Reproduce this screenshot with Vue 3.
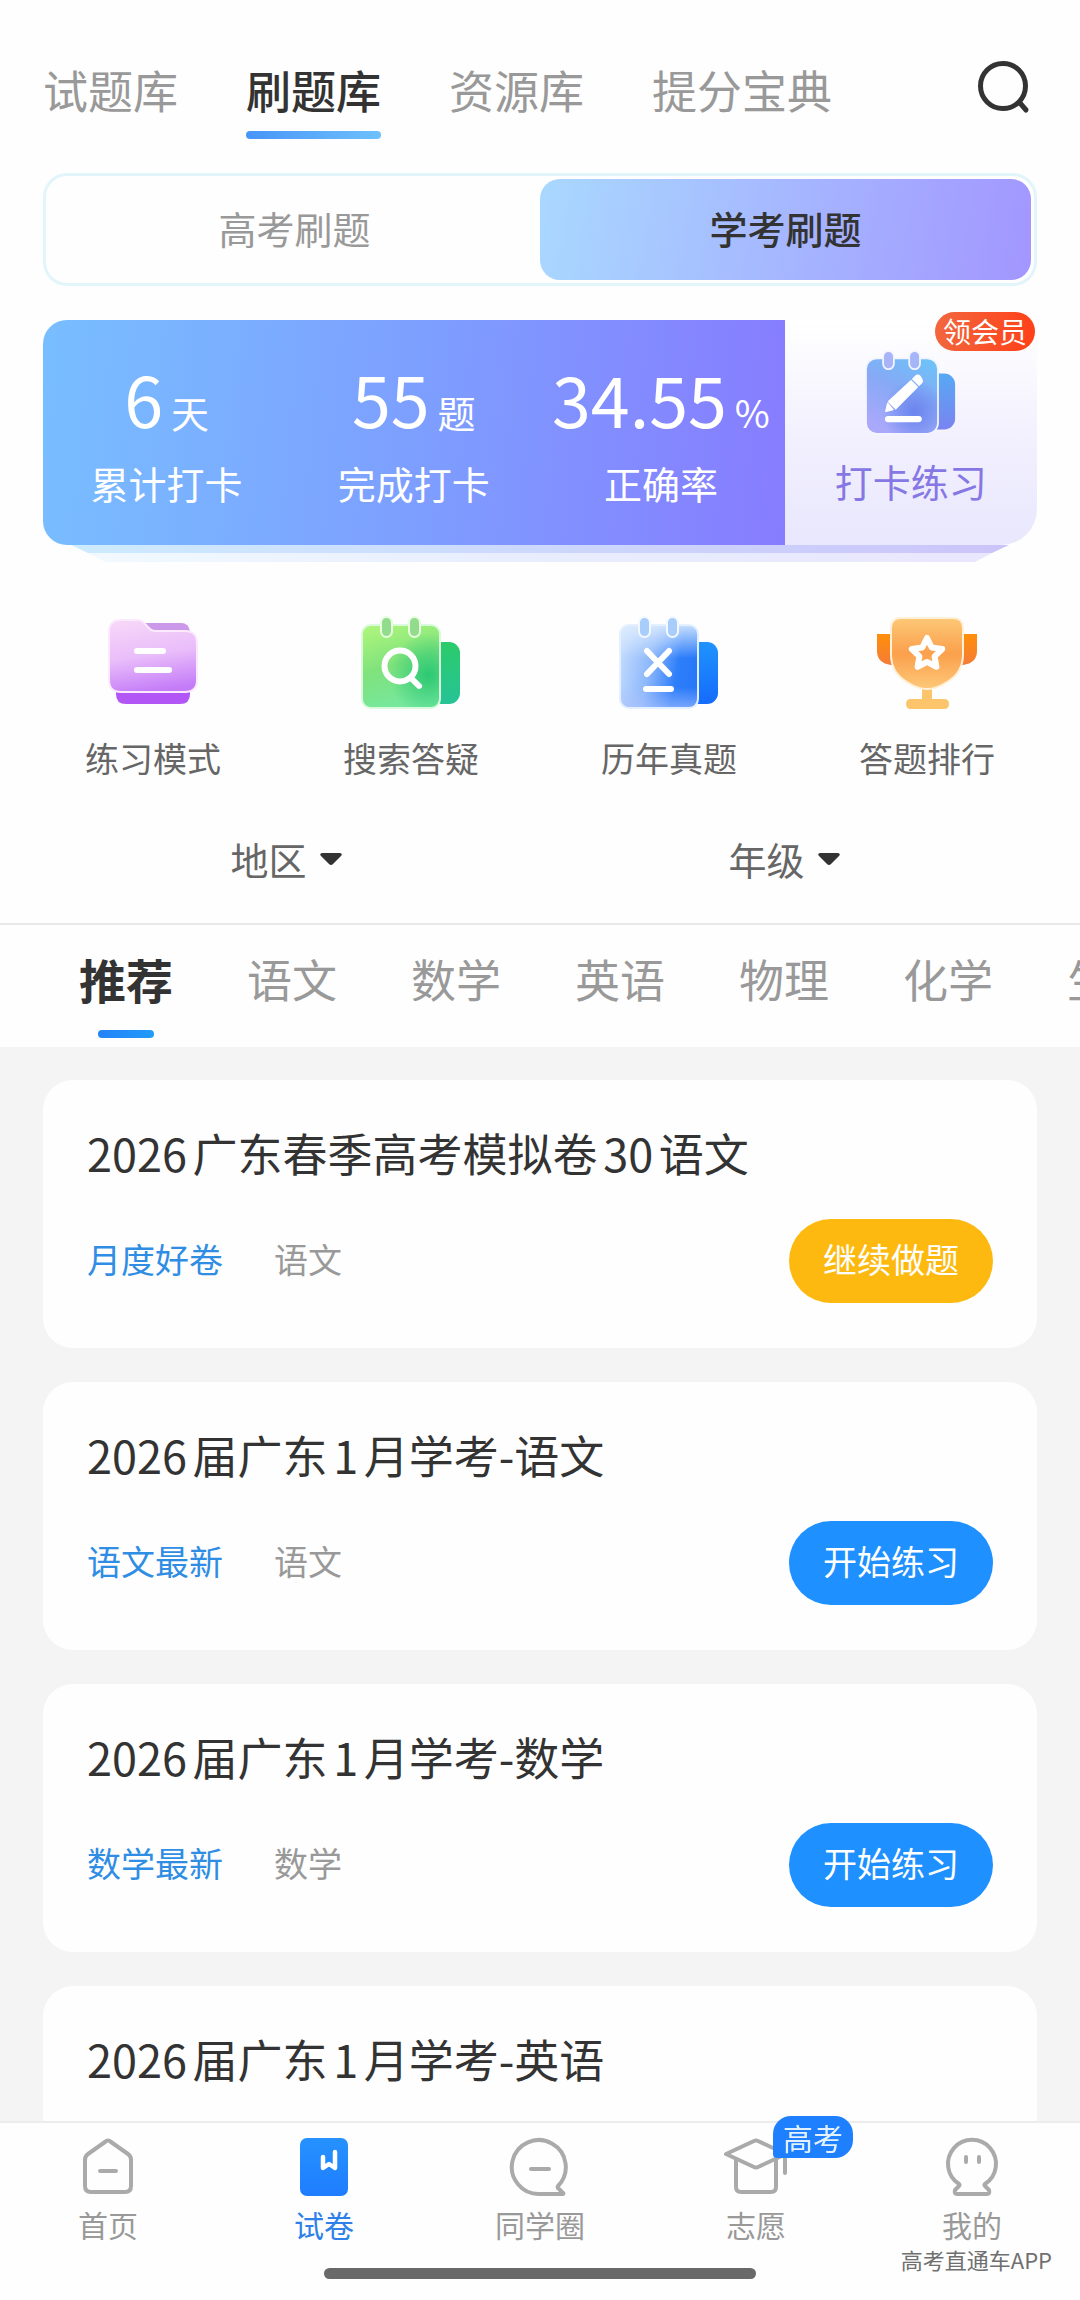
<template>
  <div class="page">
    <header class="header">
      <nav class="main-tabs">
        <button
          v-for="tab in mainTabs"
          :key="tab"
          class="main-tab"
          :class="{ active: tab === currentTab }"
          @click="currentTab = tab"
        >{{ tab }}</button>
      </nav>
      <button class="search-button" aria-label="搜索">
        <svg width="54" height="54" viewBox="0 0 54 54" fill="none" stroke="#333" stroke-width="5" stroke-linecap="round">
          <circle cx="26" cy="26" r="22.5" />
          <path d="M43 43l6 7" />
        </svg>
      </button>
    </header>

    <div class="segment">
      <button
        v-for="mode in modes"
        :key="mode"
        class="segment-item"
        :class="{ active: mode === currentMode }"
        @click="currentMode = mode"
      >{{ mode }}</button>
    </div>

    <section class="stats">
      <div class="stats-main">
        <div class="stats-data">
          <div v-for="item in stats" :key="item.label" class="stat">
            <div class="stat-value">{{ item.value }}<span class="stat-unit">{{ item.unit }}</span></div>
            <div class="stat-label">{{ item.label }}</div>
          </div>
        </div>
        <button class="practice">
          <svg class="practice-icon" width="90" height="83" viewBox="0 0 100 92">
            <defs>
              <linearGradient id="pBody" x1="0.9" y1="0" x2="0.4" y2="1">
                <stop offset="0" stop-color="#6cc4f8" />
                <stop offset="0.5" stop-color="#86a9f6" />
                <stop offset="1" stop-color="#a9a8fa" />
              </linearGradient>
              <radialGradient id="pGlow" cx="0.68" cy="0.72" r="0.45">
                <stop offset="0" stop-color="#6a83ee" />
                <stop offset="1" stop-color="#6a83ee" stop-opacity="0" />
              </radialGradient>
              <linearGradient id="pBack" x1="0" y1="0" x2="0" y2="1">
                <stop offset="0" stop-color="#57a9f4" />
                <stop offset="1" stop-color="#7a83f0" />
              </linearGradient>
            </defs>
            <rect x="60" y="25" width="39" height="62" rx="12" fill="url(#pBack)" />
            <rect x="0" y="8" width="80" height="84" rx="12" fill="url(#pBody)" stroke="#f4f4ff" stroke-width="2" />
            <rect x="1" y="9" width="78" height="82" rx="11" fill="url(#pGlow)" />
            <rect x="19" y="0" width="12" height="20" rx="6" fill="#a9b4f8" stroke="#f4f4ff" stroke-width="2" />
            <rect x="48" y="0" width="12" height="20" rx="6" fill="#a4b6f8" stroke="#f4f4ff" stroke-width="2" />
            <path d="M22 67l2-9 6 7z M25 56L50 33l7 7-24 24z M52 31l4-4q2-1 4 1l2 3q1 2 0 4l-3 3z" fill="#fff" stroke="#fff" stroke-width="1.5" stroke-linejoin="round" />
            <rect x="21" y="72" width="41" height="7" rx="3.5" fill="#fff" />
          </svg>
          <span class="practice-label">打卡练习</span>
          <span class="practice-badge">领会员</span>
        </button>
      </div>
      <div class="stats-layer first"></div>
      <div class="stats-layer second"></div>
    </section>

    <nav class="menu">
      <button class="menu-item">
        <svg width="100" height="92" viewBox="0 0 100 92">
          <defs>
            <linearGradient id="fBody" x1="0.3" y1="0" x2="0.5" y2="1">
              <stop offset="0" stop-color="#f6d6f8" />
              <stop offset="0.5" stop-color="#e9bdfa" />
              <stop offset="1" stop-color="#c47bf8" />
            </linearGradient>
          </defs>
          <path d="M40 6h38q8 0 9 9v10H44z" fill="#cb98ea" />
          <path d="M13 68h74v9q0 10-10 10H23q-10 0-10-10z" fill="#b257f6" />
          <path d="M18 3h17q4 0 7 4l5 5q2 2 5 2h30q12 0 12 12v37q0 12-12 12H18Q6 75 6 63V15Q6 3 18 3z" fill="url(#fBody)" stroke="#fbeafe" stroke-width="2" />
          <rect x="31" y="31" width="32" height="6" rx="3" fill="#fff" />
          <rect x="31" y="50" width="38" height="6" rx="3" fill="#fff" />
        </svg>
        <span>练习模式</span>
      </button>
      <button class="menu-item">
        <svg width="100" height="92" viewBox="0 0 100 92">
          <defs>
            <linearGradient id="sBody" x1="0.2" y1="0" x2="0.5" y2="1">
              <stop offset="0" stop-color="#adf57c" />
              <stop offset="0.5" stop-color="#7fe27c" />
              <stop offset="1" stop-color="#76e8a0" />
            </linearGradient>
            <radialGradient id="sGlow" cx="0.85" cy="0.6" r="0.5">
              <stop offset="0" stop-color="#2cc873" />
              <stop offset="1" stop-color="#2cc873" stop-opacity="0" />
            </radialGradient>
            <linearGradient id="sBack" x1="0" y1="0" x2="0" y2="1">
              <stop offset="0" stop-color="#2bcb6a" />
              <stop offset="1" stop-color="#26c397" />
            </linearGradient>
          </defs>
          <rect x="60" y="25" width="39" height="62" rx="11" fill="url(#sBack)" />
          <rect x="1" y="8" width="78" height="83" rx="9" fill="url(#sBody)" />
          <rect x="1" y="8" width="78" height="83" rx="9" fill="url(#sGlow)" stroke="#d9fbdc" stroke-width="2" />
          <rect x="20" y="0" width="11" height="20" rx="5.5" fill="#93dc8d" stroke="#e6fde0" stroke-width="2" />
          <rect x="48" y="0" width="11" height="20" rx="5.5" fill="#93dc8d" stroke="#e6fde0" stroke-width="2" />
          <g fill="none" stroke="#fff" stroke-width="6" stroke-linecap="round">
            <circle cx="39" cy="49" r="15.5" />
            <path d="M50 61l8 8" />
          </g>
        </svg>
        <span>搜索答疑</span>
      </button>
      <button class="menu-item">
        <svg width="100" height="92" viewBox="0 0 100 92">
          <defs>
            <linearGradient id="eBody" x1="0" y1="0.3" x2="1" y2="0.5">
              <stop offset="0" stop-color="#c4dcfd" />
              <stop offset="0.4" stop-color="#8db8fb" />
              <stop offset="0.75" stop-color="#2f7ffa" />
              <stop offset="1" stop-color="#2778fa" />
            </linearGradient>
            <linearGradient id="eShine" x1="0" y1="0" x2="0" y2="1">
              <stop offset="0" stop-color="#e2effe" stop-opacity="0.85" />
              <stop offset="0.4" stop-color="#e2effe" stop-opacity="0" />
              <stop offset="0.75" stop-color="#b0c4fc" stop-opacity="0" />
              <stop offset="1" stop-color="#b0c4fc" stop-opacity="0.6" />
            </linearGradient>
            <linearGradient id="eBack" x1="0" y1="0" x2="0" y2="1">
              <stop offset="0" stop-color="#1f93fd" />
              <stop offset="1" stop-color="#156bfb" />
            </linearGradient>
          </defs>
          <rect x="60" y="25" width="39" height="62" rx="11" fill="url(#eBack)" />
          <rect x="1" y="8" width="78" height="83" rx="9" fill="url(#eBody)" />
          <rect x="1" y="8" width="78" height="83" rx="9" fill="url(#eShine)" stroke="#e4f0ff" stroke-width="2" />
          <rect x="20" y="0" width="11" height="20" rx="5.5" fill="#a9cdfb" stroke="#f2f8ff" stroke-width="2" />
          <rect x="48" y="0" width="11" height="20" rx="5.5" fill="#a9cdfb" stroke="#f2f8ff" stroke-width="2" />
          <path d="M28 34l22 23M50 34L28 57M27 72h25" fill="none" stroke="#fff" stroke-width="6" stroke-linecap="round" />
        </svg>
        <span>历年真题</span>
      </button>
      <button class="menu-item">
        <svg width="100" height="92" viewBox="0 0 100 92">
          <defs>
            <linearGradient id="tCup" x1="0" y1="0" x2="0" y2="1">
              <stop offset="0" stop-color="#fdc877" />
              <stop offset="0.5" stop-color="#fba04c" />
              <stop offset="1" stop-color="#fdc878" />
            </linearGradient>
            <linearGradient id="tEar" x1="0" y1="0" x2="0" y2="1">
              <stop offset="0" stop-color="#ff8f09" />
              <stop offset="1" stop-color="#f47c38" />
            </linearGradient>
          </defs>
          <path d="M0 17h20v31h-6Q0 46 0 34zM100 17H80v31h6q14-2 14-14z" fill="url(#tEar)" />
          <path d="M45 66h10v16h12q5 0 5 5t-5 5H34q-5 0-5-5t5-5h11z" fill="#fcc56b" />
          <path d="M24 1h52q10 0 10 10v26q0 19-16 28-10 7-20 7t-20-7Q14 56 14 37V11Q14 1 24 1z" fill="url(#tCup)" stroke="#fff0d8" stroke-width="2" />
          <path d="M50 21l4.700 9.500 10.500 1.500-7.600 7.400 1.800 10.400-9.400-4.900-9.400 4.900 1.800-10.400-7.600-7.400 10.500-1.500z" fill="none" stroke="#fff" stroke-width="6" stroke-linejoin="round" />
        </svg>
        <span>答题排行</span>
      </button>
    </nav>

    <div class="filters">
      <label v-for="item in filters" :key="item.name" class="filter">
        <select class="filter-select" :aria-label="item.name">
          <option>{{ item.name }}</option>
        </select>
        <svg width="22" height="12" viewBox="0 0 22 12"><path d="M2 0h18q3 1 1 3l-8 8q-2 2-4 0L1 3q-2-2 1-3z" fill="#333" /></svg>
      </label>
    </div>

    <nav class="subjects">
      <button
        v-for="subject in subjects"
        :key="subject"
        class="subject"
        :class="{ active: subject === currentSubject }"
        @click="currentSubject = subject"
      >{{ subject }}</button>
    </nav>

    <main class="paper-list">
      <article v-for="paper in papers" :key="paper.title" class="paper">
        <h2 class="paper-title">{{ paper.title }}</h2>
        <div class="paper-row">
          <span class="paper-tag">{{ paper.tag }}</span>
          <span class="paper-subject">{{ paper.subject }}</span>
          <button class="paper-button" :class="{ resume: paper.started }">
            {{ paper.started ? '继续做题' : '开始练习' }}
          </button>
        </div>
      </article>
    </main>

    <footer class="tabbar">
      <nav class="tabbar-items">
        <a href="#home" class="tabbar-item">
          <svg width="60" height="60" viewBox="0 0 60 60" class="line-icon">
            <path d="M33 5l17 12q3 2 3 6v26q0 6-6 6H13q-6 0-6-6V23q0-4 3-6L27 5q3-3 6 0zM22 34h16" />
          </svg>
          <span>首页</span>
        </a>
        <a href="#paper" class="tabbar-item current">
          <svg width="60" height="60" viewBox="0 0 60 60">
            <defs>
              <linearGradient id="nDoc" x1="0" y1="0" x2="0" y2="1">
                <stop offset="0" stop-color="#2592ff" />
                <stop offset="1" stop-color="#1f7dff" />
              </linearGradient>
            </defs>
            <rect x="6" y="1" width="48" height="58" rx="7" fill="url(#nDoc)" />
            <path d="M29 20v11l6-4 6 4V15" fill="none" stroke="#fff" stroke-width="4.500" stroke-linecap="round" stroke-linejoin="round" />
          </svg>
          <span>试卷</span>
        </a>
        <a href="#circle" class="tabbar-item">
          <svg width="60" height="60" viewBox="0 0 60 60" class="line-icon">
            <path d="M30 57a27 27 0 1 1 18-8q-1 2 1 3l4 4q1 1-1 1zM21 32h18" />
          </svg>
          <span>同学圈</span>
        </a>
        <a href="#wish" class="tabbar-item">
          <span class="icon-wrap">
            <svg width="64" height="60" viewBox="-2 0 64 60" class="line-icon">
              <path d="M0 17L28 4q2-1 4 0l28 13-28 13q-2 1-4 0zM10 22v28q0 5 5 5h30q5 0 5-5V22M59 18v18" />
            </svg>
            <span class="tabbar-badge">高考</span>
          </span>
          <span>志愿</span>
        </a>
        <a href="#mine" class="tabbar-item">
          <svg width="60" height="60" viewBox="0 0 60 60" class="line-icon">
            <path d="M17 47A24 24 0 1 1 43 47q-1 1 0 2l4 4q1 4-2 4H15q-3 0-2-4l4-4q1-1 0-2zM24 20v5M37 20v5" />
          </svg>
          <span>我的</span>
        </a>
      </nav>
      <div class="home-bar"></div>
      <span class="watermark">高考直通车APP</span>
    </footer>
  </div>
</template>

<script setup>
import { ref } from 'vue';

const mainTabs = ['试题库', '刷题库', '资源库', '提分宝典'];
const currentTab = ref('刷题库');

const modes = ['高考刷题', '学考刷题'];
const currentMode = ref('学考刷题');

const stats = [
  { value: '6', unit: '天', label: '累计打卡' },
  { value: '55', unit: '题', label: '完成打卡' },
  { value: '34.55', unit: '%', label: '正确率' }
];

const filters = [{ name: '地区' }, { name: '年级' }];

const subjects = ['推荐', '语文', '数学', '英语', '物理', '化学', '生物'];
const currentSubject = ref('推荐');

const papers = ref([
  { title: '2026广东春季高考模拟卷30语文', tag: '月度好卷', subject: '语文', started: true },
  { title: '2026届广东1月学考-语文', tag: '语文最新', subject: '语文', started: false },
  { title: '2026届广东1月学考-数学', tag: '数学最新', subject: '数学', started: false },
  { title: '2026届广东1月学考-英语', tag: '英语最新', subject: '英语', started: false }
]);
</script>

<style>
body {
  margin: 0;
  background: #fefefe;
}
</style>

<style scoped>
.page {
  display: flex;
  flex-direction: column;
  height: 100vh;
  background: #fefefe;
  color: #333;
  font-family: "Noto Sans CJK SC", sans-serif;
}

button,
select {
  margin: 0;
  padding: 0;
  border: none;
  background: none;
  color: inherit;
  font-family: inherit;
  cursor: pointer;
}

svg {
  display: block;
  flex: none;
  overflow: visible;
}

.header {
  display: flex;
  justify-content: space-between;
  align-items: flex-start;
  padding: 58px 49px 0 43px;
}

.main-tabs {
  display: flex;
  gap: 68px;
}

.main-tab {
  font-size: 45px;
  line-height: 64px;
  color: #999;
  white-space: nowrap;
}

.main-tab::after {
  content: '';
  display: block;
  height: 8px;
  margin-top: 9px;
  border-radius: 4px;
}

.main-tab.active {
  color: #333;
  font-weight: 500;
}

.main-tab.active::after {
  background: linear-gradient(90deg, #4795f7, #6fc0fd);
}

.search-button {
  padding-top: 2px;
}

.segment {
  display: flex;
  margin: 34px 43px 0;
  padding: 3px;
  border: 3px solid #e2f5fb;
  border-radius: 24px;
}

.segment-item {
  flex: 1;
  height: 101px;
  padding-bottom: 5px;
  border-radius: 20px;
  font-size: 38px;
  color: #999;
}

.segment-item.active {
  background: linear-gradient(100deg, #a9d8ff, #a296ff);
  color: #333;
  font-weight: 500;
}

.stats {
  margin: 34px 43px 0;
}

.stats-main {
  display: flex;
}

.stats-data {
  flex: 1;
  display: flex;
  border-radius: 24px 0 0 24px;
  background: linear-gradient(95deg, #78beff, #7d9fff 50%, #877cff);
  color: #fff;
}

.stat {
  flex: 1 1 0;
  min-width: 0;
  padding: 38px 0 37px;
  text-align: center;
  white-space: nowrap;
}

.stat-value {
  font-size: 70px;
  line-height: 80px;
}

.stat-unit {
  margin-left: 8px;
  font-size: 38px;
  line-height: 38px;
}

.stat-label {
  margin-top: 20px;
  font-size: 38px;
  line-height: 50px;
}

.practice {
  flex: none;
  width: 25.4%;
  position: relative;
  display: flex;
  flex-direction: column;
  align-items: center;
  padding: 31px 0 0;
  border-radius: 0 0 36px 0;
  background: linear-gradient(180deg, #fff, #f3f1fe 50%, #e8e7fd);
}

.practice-label {
  margin-top: 22px;
  font-size: 38px;
  line-height: 50px;
  color: #8678e4;
}

.practice-badge {
  position: absolute;
  top: -8px;
  right: 2px;
  padding: 0 8px;
  border-radius: 20px;
  background: linear-gradient(100deg, #f2683f, #ff3f17);
  color: #fff;
  font-size: 28px;
  line-height: 39px;
}

.stats-layer {
  margin: 0 28px;
}

.stats-layer.first {
  height: 8px;
  background: linear-gradient(90deg, #cdebff, #ccdafd 45%, #cbc4fa);
  clip-path: polygon(0 0, 100% 0, calc(100% - 17px) 100%, 17px 100%);
}

.stats-layer.second {
  height: 9px;
  background: linear-gradient(90deg, #f2faff, #e8eefe 45%, #e9e6fd);
  clip-path: polygon(17px 0, calc(100% - 17px) 0, calc(100% - 34px) 100%, 34px 100%);
}

.menu {
  display: flex;
  padding: 55px 24px 0;
}

.menu-item {
  flex: 1;
  display: flex;
  flex-direction: column;
  align-items: center;
  gap: 26px;
  font-size: 34px;
  line-height: 46px;
  color: #666;
}

.filters {
  display: flex;
  padding: 48px 47px 34px 37px;
  border-bottom: 2px solid #e9e9e9;
}

.filter {
  flex: 1;
  display: flex;
  justify-content: center;
  align-items: center;
  gap: 12px;
}

.filter-select {
  appearance: none;
  font-size: 38px;
  line-height: 60px;
  color: #666;
}

.subjects {
  display: flex;
  gap: 74px;
  padding: 22px 79px 9px;
  overflow-x: auto;
  scrollbar-width: none;
}

.subject {
  flex: none;
  font-size: 45px;
  line-height: 64px;
  color: #999;
}

.subject::after {
  content: '';
  display: block;
  width: 56px;
  height: 8px;
  margin: 19px auto 0;
  border-radius: 4px;
}

.subject.active {
  color: #333;
  font-size: 47px;
  font-weight: 700;
}

.subject.active::after {
  background: linear-gradient(90deg, #2482f8, #219cfa);
}

.paper-list {
  flex: 1;
  min-height: 0;
  display: flex;
  flex-direction: column;
  gap: 34px;
  padding: 33px 43px;
  overflow-y: auto;
  scrollbar-width: none;
  background: #f4f4f4;
}

.paper {
  flex: none;
  padding: 43px 44px 45px;
  border-radius: 30px;
  background: #fefefe;
}

.paper-title {
  margin: 0 0 36px;
  font-size: 45px;
  font-weight: 400;
  line-height: 60px;
  text-autospace: normal;
}

.paper-row {
  display: flex;
  align-items: center;
  font-size: 34px;
}

.paper-tag,
.paper-subject {
  padding-bottom: 5px;
}

.paper-tag {
  margin-right: 51px;
  color: #2f8de4;
}

.paper-subject {
  color: #999;
}

.paper-button {
  margin-left: auto;
  height: 84px;
  padding: 0 34px 5px;
  border-radius: 42px;
  background: #1e90ff;
  color: #fff;
  font-size: 34px;
}

.paper-button.resume {
  background: #fdb90f;
}

.tabbar {
  position: relative;
  border-top: 2px solid #ececec;
  background: #fefefe;
}

.tabbar-items {
  display: flex;
  padding-top: 14px;
}

.tabbar-item {
  flex: 1;
  display: flex;
  flex-direction: column;
  align-items: center;
  gap: 6px;
  font-size: 30px;
  line-height: 42px;
  color: #999;
  text-decoration: none;
}

.tabbar-item.current {
  color: #2f80e8;
}

.line-icon {
  fill: none;
  stroke: #aaa;
  stroke-width: 4;
  stroke-linecap: round;
  stroke-linejoin: round;
}

.icon-wrap {
  position: relative;
}

.tabbar-badge {
  position: absolute;
  top: -21px;
  left: 49px;
  padding: 0 10px;
  border-radius: 18px 18px 18px 4px;
  background: #1e80ff;
  color: #e3f1ff;
  font-size: 30px;
  line-height: 42px;
  white-space: nowrap;
}

.home-bar {
  width: 40%;
  height: 11px;
  margin: 23px auto 21px;
  border-radius: 6px;
  background: #696969;
}

.watermark {
  position: absolute;
  right: 28px;
  bottom: 25px;
  font-size: 22px;
  line-height: 32px;
  color: #707070;
  text-autospace: no-autospace;
}
</style>
